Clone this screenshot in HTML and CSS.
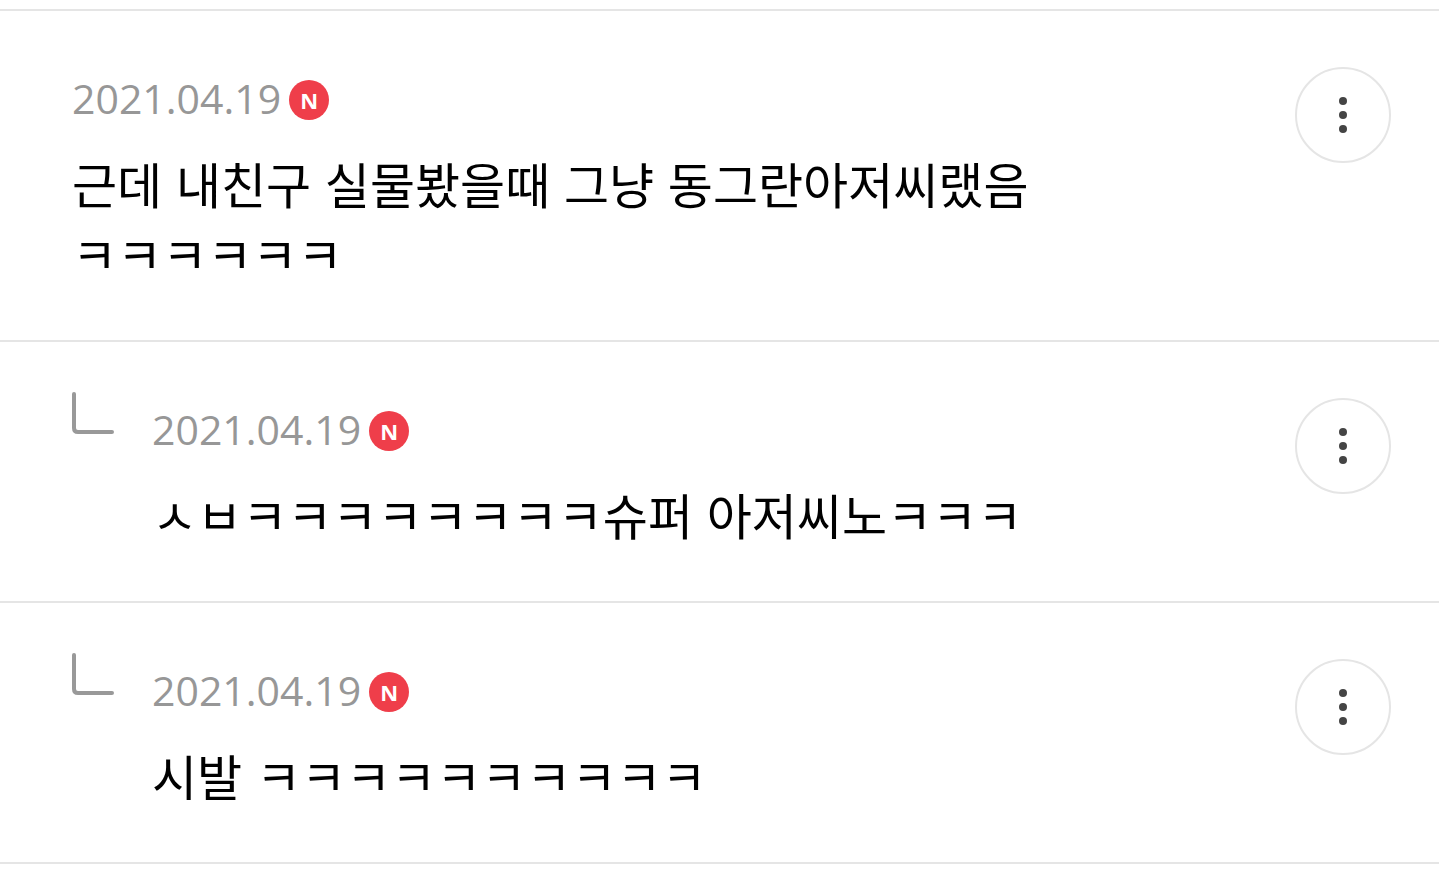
FILE: index.html
```
<!DOCTYPE html>
<html lang="ko">
<head>
    <meta charset="UTF-8">
    <meta name="viewport" content="width=device-width, initial-scale=1.0">
    <title>댓글</title>
    <link rel="stylesheet" href="styles.css">
</head>
<body>
    <ul class="comments">
        <li class="comment">
            <div class="body">
                <div class="meta">
                    <time datetime="2021-04-19">2021.04.19</time>
                    <span class="new">N</span>
                </div>
                <p class="text">근데 내친구 실물봤을때 그냥 동그란아저씨랬음<br>ㅋㅋㅋㅋㅋㅋ</p>
            </div>
            <button class="more" type="button" aria-label="더보기"><svg viewBox="0 0 8 36"><circle cx="4" cy="4" r="4"/><circle cx="4" cy="18" r="4"/><circle cx="4" cy="32" r="4"/></svg></button>
        </li>
        <li class="comment reply">
            <svg class="branch" viewBox="0 0 42 42" aria-hidden="true"><path d="M2 2V36Q2 40 6 40H40"/></svg>
            <div class="body">
                <div class="meta">
                    <time datetime="2021-04-19">2021.04.19</time>
                    <span class="new">N</span>
                </div>
                <p class="text">ㅅㅂㅋㅋㅋㅋㅋㅋㅋㅋ슈퍼 아저씨노ㅋㅋㅋ</p>
            </div>
            <button class="more" type="button" aria-label="더보기"><svg viewBox="0 0 8 36"><circle cx="4" cy="4" r="4"/><circle cx="4" cy="18" r="4"/><circle cx="4" cy="32" r="4"/></svg></button>
        </li>
        <li class="comment reply">
            <svg class="branch" viewBox="0 0 42 42" aria-hidden="true"><path d="M2 2V36Q2 40 6 40H40"/></svg>
            <div class="body">
                <div class="meta">
                    <time datetime="2021-04-19">2021.04.19</time>
                    <span class="new">N</span>
                </div>
                <p class="text">시발 ㅋㅋㅋㅋㅋㅋㅋㅋㅋㅋ</p>
            </div>
            <button class="more" type="button" aria-label="더보기"><svg viewBox="0 0 8 36"><circle cx="4" cy="4" r="4"/><circle cx="4" cy="18" r="4"/><circle cx="4" cy="32" r="4"/></svg></button>
        </li>
    </ul>
</body>
</html>
```
FILE: styles.css
```
:root {
    --line-color: #e5e5e5;
    --date-color: #979797;
    --new-color: #ef3e4a;
}
* {
    box-sizing: border-box;
}
body {
    margin: 0;
    background: #fff;
    color: #000;
    font-family: "Noto Sans CJK KR", sans-serif;
}
.comments {
    list-style: none;
    margin: 0;
    padding: 9px 0 0;
}
.comment {
    display: flex;
    align-items: flex-start;
    padding: 56px 48px 52px 72px;
    border-top: 2px solid var(--line-color);
}
.comment:last-child {
    border-bottom: 2px solid var(--line-color);
}
.body {
    flex: 1;
}
.meta {
    display: flex;
    align-items: center;
    gap: 8px;
    height: 66px;
}
.meta time {
    padding-bottom: 4px;
    color: var(--date-color);
    font-family: "Open Sans", sans-serif;
    font-size: 41px;
}
.new {
    width: 40px;
    height: 40px;
    border-radius: 50%;
    background: var(--new-color);
    color: #fff;
    font-family: "Open Sans", sans-serif;
    font-weight: 700;
    font-size: 22px;
    line-height: 40px;
    text-align: center;
}
.text {
    margin: 15px 0 0;
    font-size: 49px;
    line-height: 70px;
}
.branch {
    width: 42px;
    height: 42px;
    margin: -6px 38px 0 0;
    fill: none;
    stroke: #999;
    stroke-width: 4;
    stroke-linecap: round;
}
.more {
    display: flex;
    align-items: center;
    justify-content: center;
    width: 96px;
    height: 96px;
    padding: 0;
    border: 2px solid var(--line-color);
    border-radius: 50%;
    background: #fff;
    cursor: pointer;
}
.more svg {
    width: 8px;
    height: 36px;
    fill: #444;
}
```
